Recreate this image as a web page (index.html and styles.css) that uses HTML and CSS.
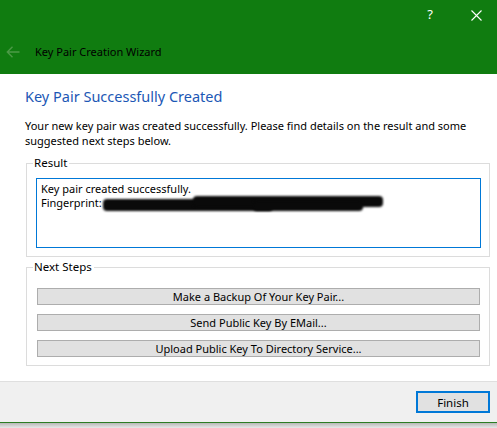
FILE: index.html
```html
<!DOCTYPE html>
<html>
<head>
<meta charset="utf-8">
<link rel="stylesheet" href="styles.css">
</head>
<body>
<div class="window">
  <header class="titlebar">
    <div class="caption-buttons">
      <span class="cap-btn help">?</span>
      <span class="cap-btn close">
        <svg width="11" height="11" viewBox="0 0 11 11"><path d="M0.5 0.5 L10.5 10.5 M10.5 0.5 L0.5 10.5" stroke="#ffffff" stroke-width="1.1" fill="none"/></svg>
      </span>
    </div>
    <div class="title-row">
      <svg class="back" width="14" height="12" viewBox="0 0 14 12"><path d="M6.5 0.8 L1.3 6 L6.5 11.2 M1.3 6 H13.5" stroke="#4c9a47" stroke-width="1.4" fill="none"/></svg>
      <span class="title">Key Pair Creation Wizard</span>
    </div>
  </header>
  <main class="content">
    <h1 class="heading">Key Pair Successfully Created</h1>
    <p class="intro">Your new key pair was created successfully. Please find details on the result and some suggested next steps below.</p>
    <fieldset class="group result-group">
      <legend class="legend-result">Result</legend>
      <div class="result-box">
        <div class="line">Key pair created successfully.</div>
        <div class="fp-line"><span class="line">Fingerprint:</span><span class="redacted"><span class="r1"></span><span class="r2"></span><span class="r3"></span></span></div>
      </div>
    </fieldset>
    <fieldset class="group steps-group">
      <legend class="legend-steps">Next Steps</legend>
      <div class="steps">
        <button class="step-btn">Make a Backup Of Your Key Pair...</button>
        <button class="step-btn">Send Public Key By EMail...</button>
        <button class="step-btn">Upload Public Key To Directory Service...</button>
      </div>
    </fieldset>
  </main>
  <footer class="footer">
    <button class="finish">Finish</button>
  </footer>
  <div class="green-edge"></div>
  <div class="shadow"></div>
</div>
</body>
</html>
```
FILE: styles.css
```css
* { box-sizing: border-box; }
html, body { margin: 0; padding: 0; background: #ffffff; }
body {
  width: 497px;
  height: 428px;
  overflow: hidden;
  font-family: "Noto Sans", "Open Sans", sans-serif;
  font-size: 11px;
  color: #000000;
}
.window { display: flex; flex-direction: column; height: 428px; }

.titlebar {
  background: #107c10;
  height: 74px;
  flex: none;
  display: flex;
  flex-direction: column;
}
.caption-buttons {
  display: flex;
  justify-content: flex-end;
  height: 30px;
  padding-right: 15px;
  gap: 38px;
  align-items: center;
}
.cap-btn { color: #ffffff; display: flex; align-items: center; }
.help { font-size: 13px; line-height: 13px; margin-top: -2px; }
.close svg { display: block; }
.title-row {
  display: flex;
  align-items: center;
  height: 44px;
  padding-left: 6px;
  padding-bottom: 1px;
}
.back { display: block; margin-right: 15px; }
.title { font-size: 11px; color: #000000; }

.content {
  flex: 1;
  display: flex;
  flex-direction: column;
  padding: 12px 7px 0 25px;
}
.heading {
  margin: 0;
  font-weight: normal;
  font-size: 14.5px;
  line-height: 20px;
  color: #1c57b5;
}
.intro {
  margin: 12px 0 0 0;
  line-height: 15px;
}
.group {
  margin: 0 0 0 1px;
  border: 1px solid #dcdcdc;
  padding: 0;
  min-width: 0;
}
.group legend {
  padding: 0 2px 0 1px;
  line-height: 14px;
  font-size: 11.5px;
}
.legend-result { margin-left: -3px; }
.legend-steps { margin-left: -4px; }
.result-group { margin-top: 8px; padding: 8px 8px 8px 9px; }
.result-box {
  border: 1px solid #0078d7;
  height: 70px;
  padding: 3px 4px;
  line-height: 14px;
}
.fp-line { display: flex; align-items: flex-start; }
.redacted {
  position: relative;
  display: inline-block;
  width: 284px;
  height: 16px;
  margin-left: 1px;
}
.redacted span {
  position: absolute;
  background: #0a0a0a;
  filter: blur(1px);
  border-radius: 4px;
}
.r1 { left: 0; top: 3px; width: 170px; height: 12px; }
.r2 { left: 90px; top: 0; width: 190px; height: 11px; }
.r3 { left: 150px; top: 5px; width: 110px; height: 10px; }

.steps-group { margin-top: 3px; padding: 14px 9px 8px 10px; }
.steps { display: flex; flex-direction: column; gap: 9px; }
.step-btn {
  height: 17px;
  background: #e1e1e1;
  border: 1px solid #adadad;
  font-family: inherit;
  font-size: 11px;
  line-height: 13px;
  padding: 0;
  color: #000000;
}

.footer {
  flex: none;
  height: 41px;
  background: #f0f0f0;
  border-top: 1px solid #dfdfdf;
  display: flex;
  justify-content: flex-end;
  align-items: flex-start;
  padding: 9px 7px 0 0;
}
.finish {
  width: 74px;
  height: 22px;
  background: #e1e1e1;
  border: 2px solid #0078d7;
  font-family: inherit;
  font-size: 11.5px;
  padding: 0;
  color: #000000;
}
.green-edge { flex: none; height: 1px; background: #2c7d24; }
.shadow { flex: none; height: 5px; background: linear-gradient(#b8b8b8, #e8e8e8); }
```
